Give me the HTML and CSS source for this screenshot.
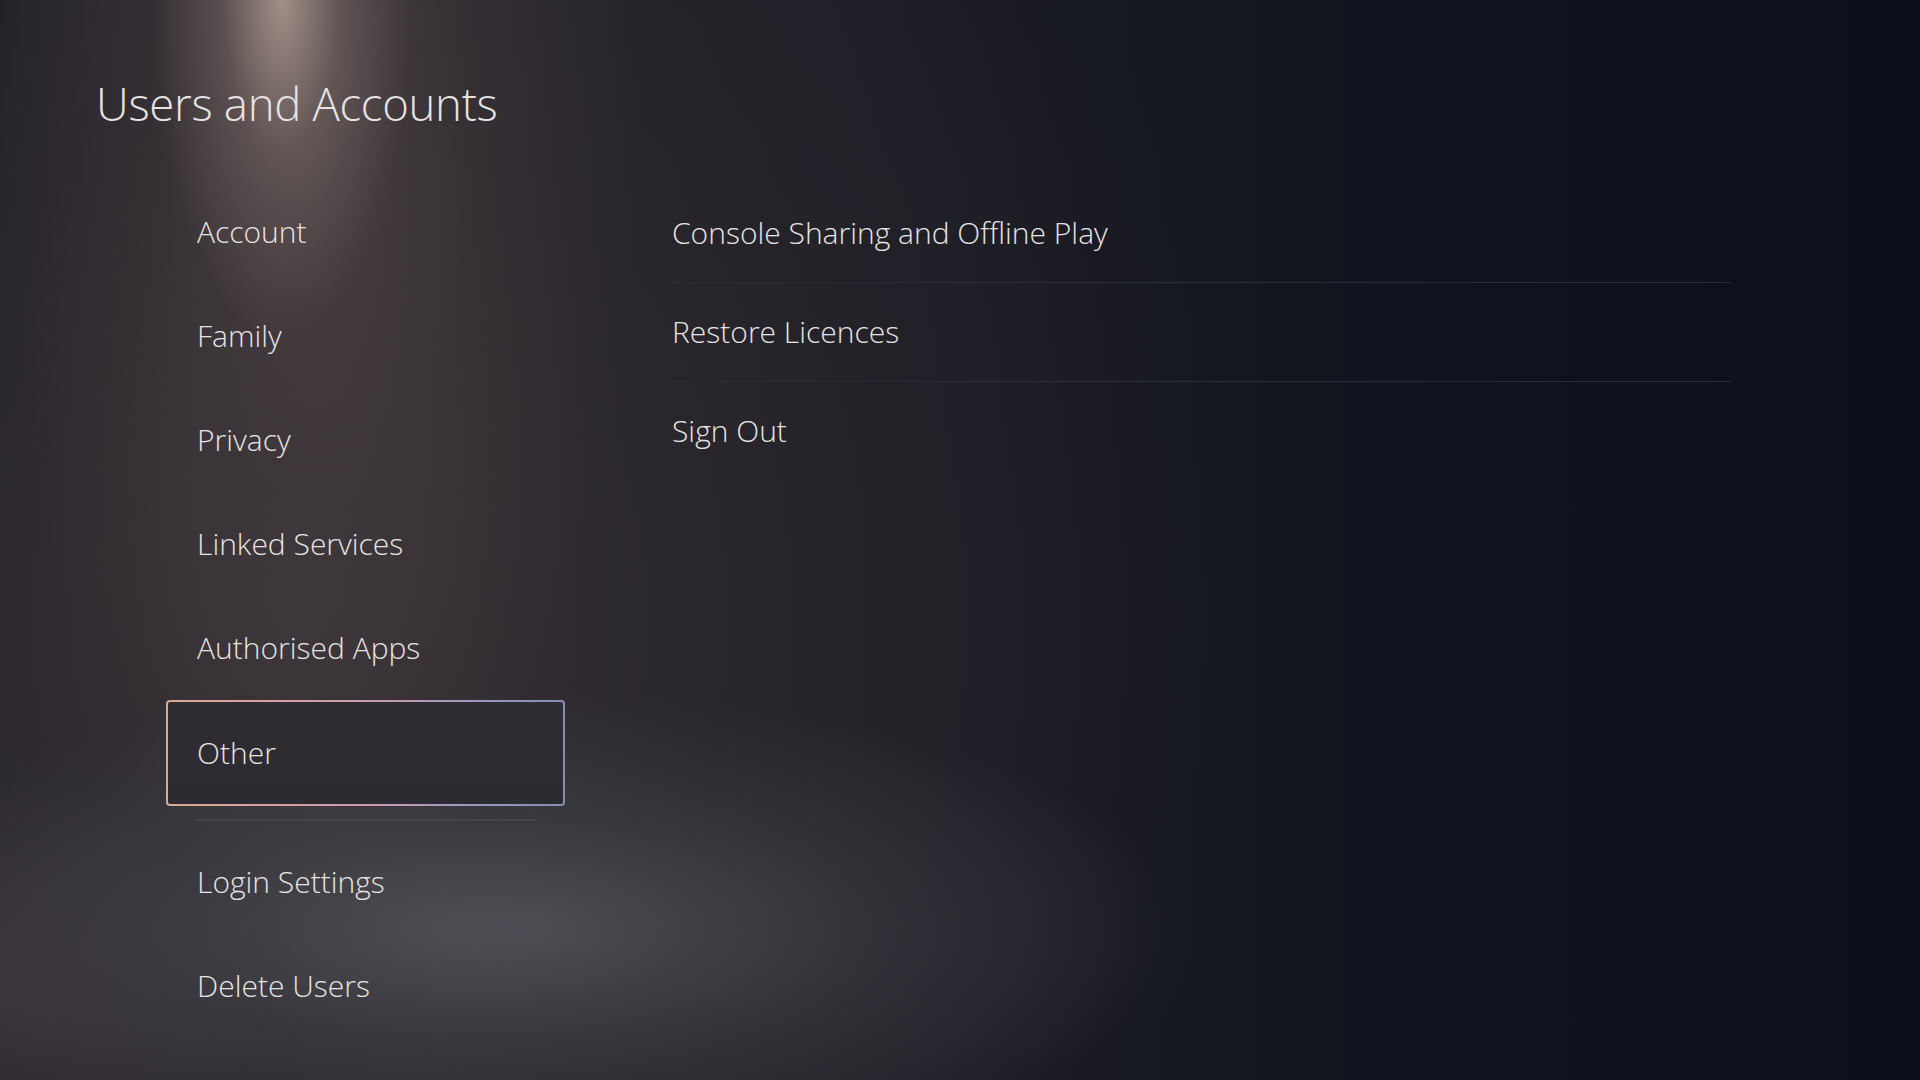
FILE: index.html
```html
<!DOCTYPE html>
<html lang="en">
<head>
<meta charset="utf-8">
<title>Users and Accounts</title>
<link rel="stylesheet" href="styles.css">
</head>
<body>
<div class="screen">
  <h1 class="title">Users and Accounts</h1>
  <div class="content">
    <ul class="menu">
      <li class="menu-item">Account</li>
      <li class="menu-item">Family</li>
      <li class="menu-item">Privacy</li>
      <li class="menu-item">Linked Services</li>
      <li class="menu-item">Authorised Apps</li>
      <li class="menu-item focused">Other</li>
      <li class="menu-divider"></li>
      <li class="menu-item">Login Settings</li>
      <li class="menu-item">Delete Users</li>
    </ul>
    <ul class="options">
      <li class="option">Console Sharing and Offline Play</li>
      <li class="option">Restore Licences</li>
      <li class="option last">Sign Out</li>
    </ul>
  </div>
</div>
</body>
</html>
```

FILE: styles.css
```css
html, body {
  margin: 0;
  padding: 0;
  width: 1920px;
  height: 1080px;
  overflow: hidden;
  background: #0f121c;
}

.screen {
  width: 1920px;
  height: 1080px;
  box-sizing: border-box;
  font-family: "Open Sans", "Noto Sans", sans-serif;
  font-weight: 300;
  color: #e6e3e3;
  background:
    radial-gradient(ellipse 130px 340px at 282px 0px, rgba(185,165,155,0.8) 0%, rgba(150,132,126,0.35) 45%, rgba(120,105,105,0) 100%),
    radial-gradient(ellipse 320px 820px at 320px 100px, rgba(95,80,80,0.55) 0%, rgba(80,68,70,0.3) 50%, rgba(60,52,56,0) 100%),
    radial-gradient(ellipse 700px 240px at 500px 930px, rgba(86,88,95,0.8) 0%, rgba(70,71,78,0.45) 50%, rgba(50,50,58,0) 100%),
    radial-gradient(ellipse 260px 220px at 0px 1000px, rgba(70,58,62,0.5) 0%, rgba(60,50,56,0) 100%),
    radial-gradient(ellipse 950px 1150px at 300px 620px, rgba(58,52,56,0.95) 0%, rgba(45,41,46,0.7) 45%, rgba(20,22,32,0) 100%),
    linear-gradient(90deg, #1d1d25 0%, #24232a 10%, #1b1c25 45%, #10131d 75%, #0d101a 100%);
  padding-top: 80px;
}

.title {
  margin: 0 0 0 96px;
  font-size: 45.5px;
  font-weight: 300;
  line-height: 46px;
  letter-spacing: -0.3px;
}

.content {
  display: flex;
  margin-top: 54px;
}

.menu {
  list-style: none;
  margin: 0 0 0 166px;
  padding: 0;
  width: 399px;
}

.menu-item {
  height: 104px;
  line-height: 100px;
  font-size: 30px;
  padding-left: 29px;
  box-sizing: border-box;
  border: 2px solid transparent;
  border-radius: 4px;
  white-space: nowrap;
}

.menu-item.focused {
  height: 106px;
  line-height: 102px;
  margin-bottom: -2px;
  background:
    linear-gradient(#2f2d32, #2c2b31) padding-box,
    linear-gradient(90deg, #d6ab95 0%, #d2a2a2 30%, #c09ab6 58%, #9099bd 82%, #838eaf 100%) border-box;
}

.menu-divider {
  height: 2px;
  margin: 15px 29px 9px 30px;
  background: #45454b;
}

.options {
  list-style: none;
  margin: 4px 0 0 107px;
  padding: 0;
  width: 1059px;
}

.option {
  height: 99px;
  line-height: 98px;
  font-size: 30px;
  box-sizing: border-box;
  border-bottom: 1px solid #2a2d37;
  white-space: nowrap;
}

.option.last {
  border-bottom: none;
}
```
